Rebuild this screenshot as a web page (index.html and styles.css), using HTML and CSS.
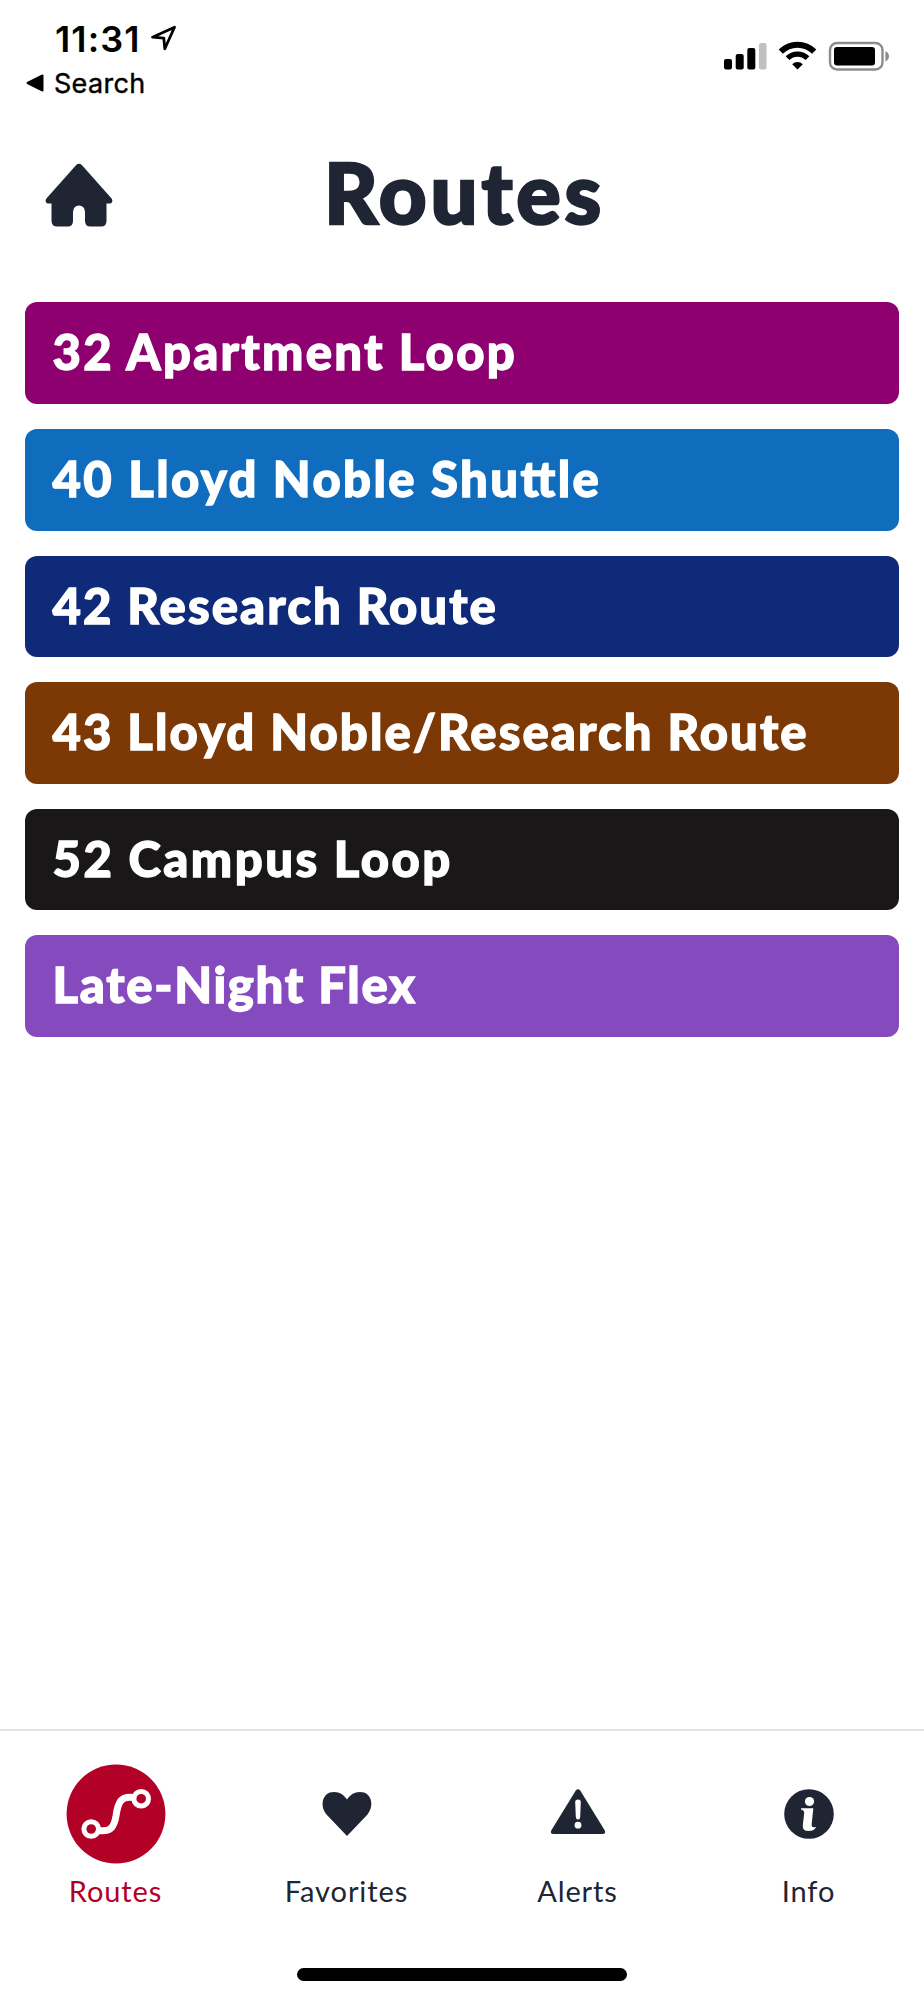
FILE: index.html
```html
<!DOCTYPE html>
<html lang="en">
<head>
  <meta charset="UTF-8" />
  <title>Routes</title>
  <link rel="stylesheet" href="styles.css">
</head>
<body>

  <!-- STATUS BAR -->
  <div class="status">
    <div class="status-left">
      <div class="clock">
        <span class="time">11:31</span>
        <svg class="location" width="28" height="28" viewBox="0 0 28 28">
          <path d="M2.5 12.2 L24.5 2.2 L14.8 23.8 L13.8 13.2 Z" fill="none" stroke="#000" stroke-width="2.8" stroke-linejoin="round" />
        </svg>
      </div>
      <div class="back">
        <svg width="18" height="18" viewBox="0 0 18 18"><path d="M1.5 9 L16.5 1.5 V16.5 Z" stroke="#000" stroke-width="2" stroke-linejoin="round" /></svg>
        <span class="back-text">Search</span>
      </div>
    </div>
    <svg class="status-icons" width="168" height="30" viewBox="0 0 168 30">
      <rect x="1" y="18" width="8" height="10.5" rx="2" />
      <rect x="12.7" y="13" width="8" height="15.5" rx="2" />
      <rect x="24.3" y="7" width="8" height="21.5" rx="2" />
      <rect x="36" y="2" width="7.5" height="26.5" rx="2" fill="#c0c0c0" />
      <g fill="none" stroke="#000">
        <path d="M57.8 10.6 A23.5 23.5 0 0 1 91.2 10.6" stroke-width="6" />
        <path d="M64.5 17.2 A14.2 14.2 0 0 1 84.5 17.2" stroke-width="5.2" />
      </g>
      <path d="M74.5 28.6 L69.2 23.2 A7.6 7.6 0 0 1 79.8 23.2 Z" />
      <rect x="107" y="2" width="52.5" height="26.5" rx="7" fill="none" stroke="#8c8c8c" stroke-width="2.4" />
      <rect x="111" y="6" width="41" height="18.5" rx="3" />
      <path d="M162.4 10 Q166 12 166 15.2 Q166 18.5 162.4 20.5 Z" fill="#8c8c8c" />
    </svg>
  </div>

  <!-- HEADER -->
  <header class="header">
    <svg class="home" width="68" height="64" viewBox="0 0 68 64">
      <path d="M31 2.2 Q34 -0.6 37 2.2 L66.6 35.5 Q68.6 39 65.5 40.5 H61.5 V58 Q61.5 63.5 56 63.5 H45.5 Q40 63.5 40 58 V49 Q39.5 42.5 34 42.5 Q28.5 42.5 28 49 V58 Q28 63.5 22.5 63.5 H12.5 Q6.5 63.5 6.5 58 V40.5 H2.5 Q-0.6 39 1.4 35.5 Z" fill="#202534" />
    </svg>
    <h1>Routes</h1>
  </header>

  <!-- ROUTE LIST -->
  <main class="routes">
    <a class="route apartment">32 Apartment Loop</a>
    <a class="route noble">40 Lloyd Noble Shuttle</a>
    <a class="route research">42 Research Route</a>
    <a class="route noble-research">43 Lloyd Noble/Research Route</a>
    <a class="route campus">52 Campus Loop</a>
    <a class="route flex">Late-Night Flex</a>
  </main>

  <!-- TAB BAR -->
  <nav class="tabs">
    <a class="tab active">
      <svg width="100" height="100" viewBox="0 0 100 100">
        <circle cx="50" cy="50" r="49.4" fill="#b20027" />
        <g fill="none" stroke="#fff">
          <circle cx="25.2" cy="65" r="7.3" stroke-width="5" />
          <circle cx="75.2" cy="34.7" r="7.3" stroke-width="5" />
          <path d="M32.5 66.5 C44 68 48 64 50 52 C52 38 55 31.5 67.5 33.5" stroke-width="7" />
        </g>
      </svg>
      <span>Routes</span>
    </a>
    <a class="tab">
      <svg width="100" height="100" viewBox="0 0 100 100">
        <path d="M50 72 L29.5 50.5 C22.5 42 25 28 37 28 C43 28 47 31 50 35.5 C53 31 57 28 63 28 C75 28 77.5 42 70.5 50.5 Z" fill="#202534" />
      </svg>
      <span>Favorites</span>
    </a>
    <a class="tab">
      <svg width="100" height="100" viewBox="0 0 100 100">
        <path d="M47.8 26.5 Q50 24 52.2 26.5 L76.5 66 Q78.5 70 74.5 70 H25.5 Q21.5 70 23.5 66 Z" fill="#202534" />
        <path d="M47.2 38 Q47.2 35.5 50 35.5 Q52.8 35.5 52.8 38 L52.2 53 Q52 55.5 50 55.5 Q48 55.5 47.8 53 Z" fill="#fff" />
        <circle cx="50" cy="61.2" r="3.4" fill="#fff" />
      </svg>
      <span>Alerts</span>
    </a>
    <a class="tab">
      <svg width="100" height="100" viewBox="0 0 100 100">
        <circle cx="50" cy="50" r="24.8" fill="#202534" />
        <circle cx="50.5" cy="37.5" r="4.6" fill="#fff" />
        <path d="M42 44.3 H54.3 L52.6 61 Q52.6 64.5 57.3 62.8 Q55.5 67 49.7 67 Q43.3 67 43.8 61.5 L45.2 49 Q45.3 46 42 45.5 Z" fill="#fff" />
      </svg>
      <span>Info</span>
    </a>
  </nav>
  <div class="home-indicator"></div>

</body>
</html>
```

FILE: styles.css
```css
* { box-sizing: border-box; }

body {
  margin: 0;
  height: 2000px;
  display: flex;
  flex-direction: column;
  background: #fff;
  color: #202534;
  font-family: Lato, sans-serif;
  overflow: hidden;
}

.status {
  height: 110px;
  padding: 17px 33px 0 26px;
  display: flex;
  justify-content: space-between;
  color: #000;
  font-family: Inter, sans-serif;
}

.clock {
  height: 43px;
  padding-left: 29px;
  display: flex;
  align-items: center;
  gap: 9px;
}

.time {
  font-size: 36px;
  font-weight: 600;
  letter-spacing: 1.1px;
}

.back {
  height: 46px;
  display: flex;
  align-items: center;
  gap: 10px;
  font-size: 27px;
  letter-spacing: 0.3px;
  -webkit-text-stroke: 0.4px;
}

.status-icons { margin-top: 24px; }

.header {
  height: 192.4px;
  padding: 53px 45px 0;
  display: grid;
  grid-template-columns: 68px 1fr 68px;
  align-items: start;
}

h1 {
  margin: -21px 0 0;
  padding-left: 5px;
  text-align: center;
  font-size: 83px;
  font-weight: 900;
  line-height: 100px;
  letter-spacing: 3.8px;
  -webkit-text-stroke: 2.4px;
}

.routes {
  flex: 1;
  padding: 0 25px;
  display: flex;
  flex-direction: column;
  gap: 25px;
}

.route {
  height: 101.6px;
  padding: 0 27.5px;
  border-radius: 12px;
  color: #fff;
  font-size: 49px;
  font-weight: 900;
  line-height: 98px;
  letter-spacing: 2.1px;
  font-feature-settings: "liga";
  -webkit-text-stroke: 1.3px;
  white-space: nowrap;
}

.apartment { background: #8e006f; letter-spacing: 2.3px; }
.noble { background: #106cbc; letter-spacing: 2.4px; }
.research { background: #102a7a; }
.noble-research { background: #7c3906; }
.campus { background: #1a1718; letter-spacing: 2.5px; }
.flex { background: #854bbe; letter-spacing: 1.7px; }

.tabs {
  height: 239px;
  padding-top: 33px;
  border-top: 2px solid #e5e5e5;
  display: grid;
  grid-template-columns: repeat(4, 1fr);
}

.tab {
  display: flex;
  flex-direction: column;
  align-items: center;
  gap: 7px;
  font-size: 29px;
  line-height: 40px;
  letter-spacing: 0.9px;
}

.active { color: #b20027; }

.home-indicator {
  width: 330px;
  height: 12.5px;
  margin: 0 auto 19.5px;
  border-radius: 7px;
  background: #000;
}
```
